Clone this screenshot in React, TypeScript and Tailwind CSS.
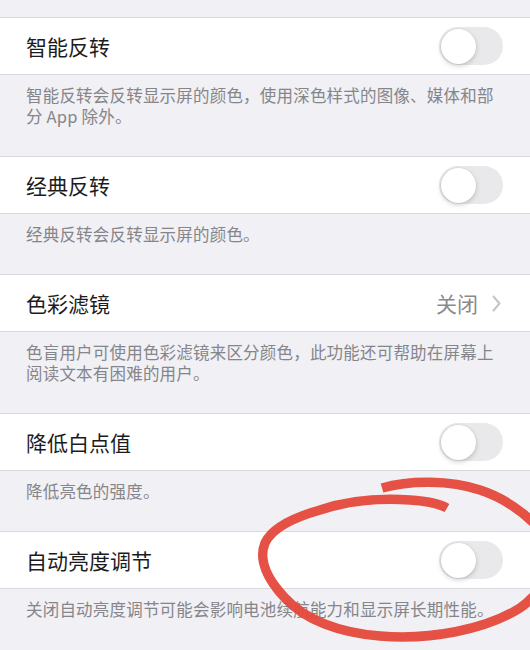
import React from "react";

const font = { fontFamily: '"Noto Sans CJK SC", "Noto Sans", sans-serif' };

function Toggle() {
  return (
    <div className="relative h-[38px] w-[64px] rounded-full bg-[#e9e9eb]">
      <div className="absolute left-[1.5px] top-[1.5px] h-[35px] w-[35px] rounded-full bg-white shadow-[0_2px_5px_rgba(0,0,0,0.18),0_0_0_0.5px_rgba(0,0,0,0.06)]" />
    </div>
  );
}

function Row({ title, right }: { title: string; right: React.ReactNode }) {
  return (
    <div className="flex h-[58px] items-center justify-between border-y border-[#d9d9dd] bg-white pl-[26px] pr-[27px]">
      <span className="text-[21px] leading-none text-[#1c1c1e]">{title}</span>
      {right}
    </div>
  );
}

function Desc({ children }: { children: React.ReactNode }) {
  return (
    <div className="pl-[26px] pr-[24px] pt-[10px] pb-[29px] text-[16.5px] leading-[21px] tracking-[0.2px] text-[#85858a]">
      {children}
    </div>
  );
}

export default function App() {
  return (
    <div className="relative h-[650px] w-[530px] overflow-hidden bg-[#f0f0f5]" style={font}>
      <div className="h-[17px]" />
      <Row title="智能反转" right={<Toggle />} />
      <Desc>智能反转会反转显示屏的颜色，使用深色样式的图像、媒体和部分 App 除外。</Desc>
      <Row title="经典反转" right={<Toggle />} />
      <Desc>经典反转会反转显示屏的颜色。</Desc>
      <Row
        title="色彩滤镜"
        right={
          <div className="flex items-center gap-[14px]">
            <span className="text-[21px] leading-none text-[#8a8a8e]">关闭</span>
            <svg width="9" height="17" viewBox="0 0 9 17" className="mr-[2px]">
              <polyline points="1.5,1.5 7.5,8.5 1.5,15.5" fill="none" stroke="#c4c4c7" strokeWidth="2" strokeLinecap="round" strokeLinejoin="round" />
            </svg>
          </div>
        }
      />
      <Desc>色盲用户可使用色彩滤镜来区分颜色，此功能还可帮助在屏幕上阅读文本有困难的用户。</Desc>
      <Row title="降低白点值" right={<Toggle />} />
      <Desc>降低亮色的强度。</Desc>
      <Row title="自动亮度调节" right={<Toggle />} />
      <Desc>关闭自动亮度调节可能会影响电池续航能力和显示屏长期性能。</Desc>

      <svg className="pointer-events-none absolute left-0 top-0" width="530" height="650" viewBox="0 0 530 650">
        <path
          d="M382 488 C410 480 450 480 480 490 C505 498 525 512 545 535 C560 560 545 590 520 608 C485 630 430 640 380 636 C340 633 305 620 285 598 C268 580 258 560 265 543 C272 528 292 518 320 510 C350 500 380 498 410 500 C425 501 440 504 447 508"
          fill="none"
          stroke="#e5483b"
          strokeWidth="9.5"
          strokeLinecap="butt"
          strokeLinejoin="round"
          opacity="0.95"
        />
      </svg>
    </div>
  );
}
